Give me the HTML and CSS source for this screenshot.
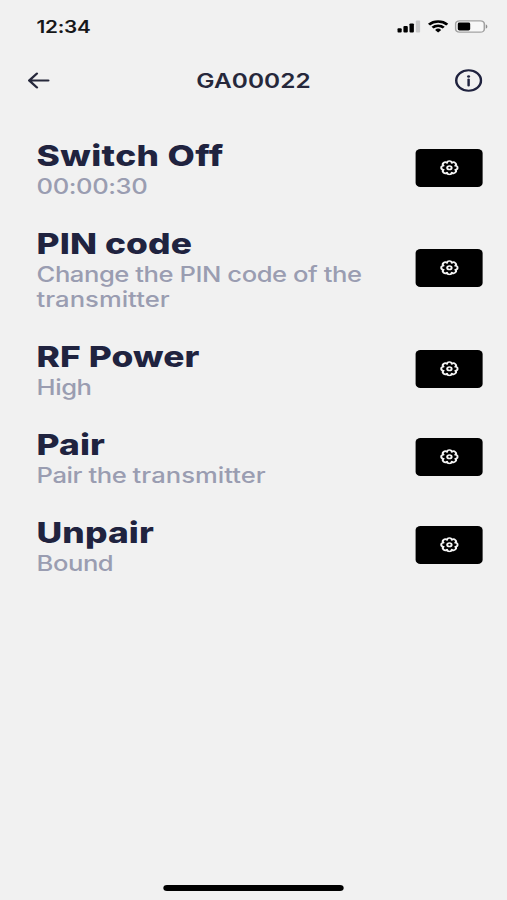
FILE: index.html
```html
<!DOCTYPE html>
<html lang="en">
<head>
<meta charset="utf-8">
<title>GA00022</title>
<link rel="stylesheet" href="styles.css">
</head>
<body>
<svg width="0" height="0" class="sprite" aria-hidden="true">
  <symbol id="gear" viewBox="0 0 24 24">
    <circle cx="12" cy="12" r="2.8"/>
    <path d="M9 4.5a3 3 0 0 1 6 0a3 3 0 0 1 4.4 4.5a3 3 0 0 1 0 6a3 3 0 0 1-4.4 4.5a3 3 0 0 1-6 0a3 3 0 0 1-4.4-4.5a3 3 0 0 1 0-6a3 3 0 0 1 4.4-4.5z"/>
  </symbol>
</svg>
<div class="app">
  <div class="status">
    <span class="time">12:34</span>
    <svg class="signal" viewBox="0 0 19 13">
      <rect x="0" y="8.3" width="3.6" height="4.2" rx=".9"/>
      <rect x="5" y="6" width="3.6" height="6.5" rx=".9"/>
      <rect x="10" y="3.4" width="3.6" height="9.1" rx=".9"/>
      <rect class="dim" x="15.2" y=".5" width="3.6" height="12" rx=".9"/>
    </svg>
    <svg class="wifi" viewBox="0 0 17 12.5">
      <path d="M1 4.6a10.6 10.6 0 0 1 15 0M3.9 7.6a6.5 6.5 0 0 1 9.2 0"/>
      <path class="dot" d="M8.5 12.4 6 9.9a3.5 3.5 0 0 1 5 0z"/>
    </svg>
    <svg class="battery" viewBox="0 0 28 13">
      <rect class="shell" x=".8" y=".8" width="23.6" height="11.4" rx="3.2"/>
      <rect class="charge" x="2.6" y="2.5" width="10.2" height="8" rx="1.4"/>
      <path class="tip" d="M25.6 4.4c1.7.6 1.7 3.6 0 4.2z"/>
    </svg>
  </div>
  <header class="bar">
    <svg class="back" viewBox="0 0 18 17"><path d="M16.6 8.5H1.2M7.2 1.6 1 8.5l6.2 6.9"/></svg>
    <h1>GA00022</h1>
    <svg class="info" viewBox="0 0 24 24"><circle cx="12" cy="12" r="10.6"/><path d="M12 11v6.2"/><circle class="point" cx="12" cy="7.7" r="1.3"/></svg>
  </header>
  <main class="list">
    <section class="row">
      <div class="text"><h2 class="off">Switch Off</h2><p>00:00:30</p></div>
      <button class="set" aria-label="Settings"><svg><use href="#gear"/></svg></button>
    </section>
    <section class="row">
      <div class="text"><h2>PIN code</h2><p>Change the PIN code of the<br><span class="wide">transmitter</span></p></div>
      <button class="set" aria-label="Settings"><svg><use href="#gear"/></svg></button>
    </section>
    <section class="row">
      <div class="text"><h2>RF Power</h2><p>High</p></div>
      <button class="set" aria-label="Settings"><svg><use href="#gear"/></svg></button>
    </section>
    <section class="row">
      <div class="text"><h2>Pair</h2><p>Pair the <span class="wide">transmitter</span></p></div>
      <button class="set" aria-label="Settings"><svg><use href="#gear"/></svg></button>
    </section>
    <section class="row">
      <div class="text"><h2>Unpair</h2><p>Bound</p></div>
      <button class="set" aria-label="Settings"><svg><use href="#gear"/></svg></button>
    </section>
  </main>
  <div class="home"></div>
</div>
</body>
</html>
```
FILE: styles.css
```css
* { box-sizing: border-box; margin: 0; padding: 0; }
html, body { width: 507px; height: 900px; overflow: hidden; background: #f1f1f1; }
body { font-family: Inter, "Liberation Sans", sans-serif; color: #20233f; }
.sprite { display: block; height: 0; }

/* Wide glyph proportions: laid out at 416px, stretched to the 507px window */
.app {
  width: 416px;
  height: 900px;
  display: flex;
  flex-direction: column;
  transform: scaleX(1.21875);
  transform-origin: 0 0;
}

.status { display: flex; align-items: center; height: 53px; padding: 0 15px 0 30px; }
.time { flex: 1; font-size: 17px; font-weight: 600; color: #161719; letter-spacing: -.2px; }
.signal { width: 19px; height: 13px; margin-right: 5.5px; }
.signal .dim { fill: #c9c9ca; }
.wifi { width: 17px; height: 12.5px; margin-right: 5.5px; }
.wifi path { fill: none; stroke: #000; stroke-width: 2.4; }
.wifi .dot { fill: #000; stroke: none; }
.battery { width: 28px; height: 13px; }
.shell { fill: #f8f8f8; stroke: #a3a3a3; stroke-width: 1.3; }
.tip { fill: #8d8d8d; }

.bar { display: flex; align-items: center; justify-content: space-between; height: 55px; padding: 0 19.5px 0 22.5px; }
.bar h1 { font-size: 20px; font-weight: 600; letter-spacing: .06px; color: #26283b; padding-left: 2px; }
.back { width: 18px; height: 17px; fill: none; stroke: #26283b; stroke-width: 2.1; stroke-linecap: round; stroke-linejoin: round; }
.info { width: 23px; height: 23px; fill: none; stroke: #20233f; stroke-width: 2.1; stroke-linecap: round; }
.info .point { fill: #20233f; stroke: none; }

.list { display: flex; flex-direction: column; gap: 27px; padding: 29px 20px 0 30px; flex: 1; }
.row { display: flex; align-items: center; justify-content: space-between; }
.row h2 { font-size: 29px; line-height: 36px; font-weight: 800; letter-spacing: .08px; }
.row .off { letter-spacing: .33px; }
.row p { font-size: 21px; line-height: 25px; font-weight: 500; color: #9a9db1; letter-spacing: -.36px; white-space: nowrap; }
.text { position: relative; top: .6px; }
.wide { letter-spacing: .02px; }
.set { display: flex; align-items: center; justify-content: center; width: 55.5px; height: 38px; border: 0; border-radius: 4px; background: #000; flex: none; }
.set svg { width: 15.5px; height: 15.5px; fill: none; stroke: #f4f4f4; stroke-width: 2.5; stroke-linejoin: round; overflow: visible; }

.home { width: 148px; height: 6px; margin: 0 auto 9px; border-radius: 3px; background: #000; }
```
